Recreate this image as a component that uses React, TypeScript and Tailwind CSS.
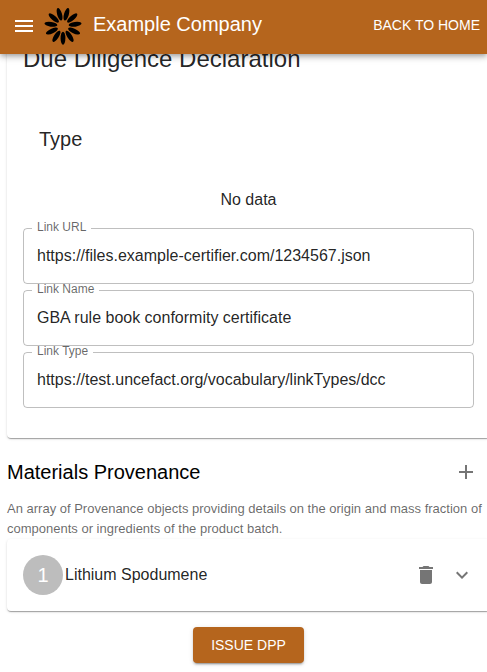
import React from 'react'
import { MdAdd, MdDelete, MdExpandMore, MdMenu } from 'react-icons/md'

interface LinkField {
  id: string
  label: string
  value: string
}

const linkFields: LinkField[] = [
  {
    id: 'linkURL',
    label: 'Link URL',
    value: 'https://files.example-certifier.com/1234567.json',
  },
  {
    id: 'linkName',
    label: 'Link Name',
    value: 'GBA rule book conformity certificate',
  },
  {
    id: 'linkType',
    label: 'Link Type',
    value: 'https://test.uncefact.org/vocabulary/linkTypes/dcc',
  },
]

const materials = ['Lithium Spodumene']

const cardShadow =
  'shadow-[0_2px_1px_-1px_rgba(0,0,0,0.2),0_1px_1px_0_rgba(0,0,0,0.14),0_1px_3px_0_rgba(0,0,0,0.12)]'

const Logo: React.FC = () => {
  const petals = Array.from({ length: 11 }, (_, i) => (i * 360) / 11)

  return (
    <svg viewBox="-19 -19 38 38" className="size-[38px]" aria-hidden="true">
      {petals.map((angle) => (
        <ellipse
          key={angle}
          cy="12.2"
          rx="2.4"
          ry="6.5"
          transform={`rotate(${angle})`}
        />
      ))}
    </svg>
  )
}

const Header: React.FC = () => {
  return (
    <header className="sticky top-0 z-10 flex h-[54px] items-center bg-[#b5651d] pb-0.5 pl-3 pr-[7px] text-white shadow-[0_2px_4px_-1px_rgba(0,0,0,0.2),0_4px_5px_0_rgba(0,0,0,0.14),0_1px_10px_0_rgba(0,0,0,0.12)]">
      <button type="button" aria-label="Menu">
        <MdMenu size={24} />
      </button>
      <div className="ml-2">
        <Logo />
      </div>
      <h1 className="ml-[11px] grow pb-1 text-xl leading-8">Example Company</h1>
      <a href="#" className="pb-0.5 text-sm uppercase">
        Back to Home
      </a>
    </header>
  )
}

const OutlinedField: React.FC<LinkField> = ({ id, label, value }) => {
  return (
    <div className="relative">
      <label
        htmlFor={id}
        className="absolute -top-1.5 left-[9px] bg-white px-[5px] text-xs leading-[10px] text-black/60"
      >
        {label}
      </label>
      <input
        id={id}
        type="text"
        defaultValue={value}
        className="block h-14 w-full rounded border border-black/25 px-[13px] text-base text-black/87"
      />
    </div>
  )
}

const App: React.FC = () => {
  return (
    <div className="overflow-x-clip bg-white font-['Liberation_Sans',Arial,sans-serif] text-black/87">
      <Header />
      <main className="-mr-[3px] -mt-[27px] pb-2 pl-[7px]">
        <section className={`rounded bg-white px-4 pb-[30px] pt-4 ${cardShadow}`}>
          <h2 className="text-2xl leading-8">Due Diligence Declaration</h2>
          <div className="mt-8 p-4">
            <h3 className="text-xl leading-8">Type</h3>
          </div>
          <p className="mt-[17px] text-center text-base leading-6">No data</p>
          <div className="mt-4 flex flex-col gap-1.5">
            {linkFields.map((field) => (
              <OutlinedField key={field.id} {...field} />
            ))}
          </div>
        </section>

        <section className="mt-4">
          <div className="flex items-center justify-between pr-3">
            <h2 className="text-xl leading-9 text-black">
              Materials Provenance
            </h2>
            <button type="button" aria-label="Add" className="text-black/54">
              <MdAdd size={24} />
            </button>
          </div>
          <p className="mt-[9px] text-[13px] leading-5 text-black/60">
            An array of Provenance objects providing details on the origin and
            mass fraction of components or ingredients of the product batch.
          </p>
          {materials.map((name, index) => (
            <div
              key={name}
              className={`flex items-center rounded bg-white p-4 ${cardShadow}`}
            >
              <span className="flex size-10 items-center justify-center rounded-full bg-[#bdbdbd] text-xl text-white">
                {index + 1}
              </span>
              <span className="ml-0.5 grow text-base">{name}</span>
              <button
                type="button"
                aria-label="Delete"
                className="mr-3 text-black/54"
              >
                <MdDelete size={24} />
              </button>
              <button
                type="button"
                aria-label="Expand"
                className="text-black/54"
              >
                <MdExpandMore size={24} />
              </button>
            </div>
          ))}
        </section>

        <div className="mt-4 flex justify-center">
          <button
            type="button"
            className="rounded bg-[#b5651d] px-[18px] py-1.5 text-sm leading-6 text-white uppercase shadow-[0_3px_1px_-2px_rgba(0,0,0,0.2),0_2px_2px_0_rgba(0,0,0,0.14),0_1px_5px_0_rgba(0,0,0,0.12)]"
          >
            Issue DPP
          </button>
        </div>
      </main>
    </div>
  )
}

export default App
